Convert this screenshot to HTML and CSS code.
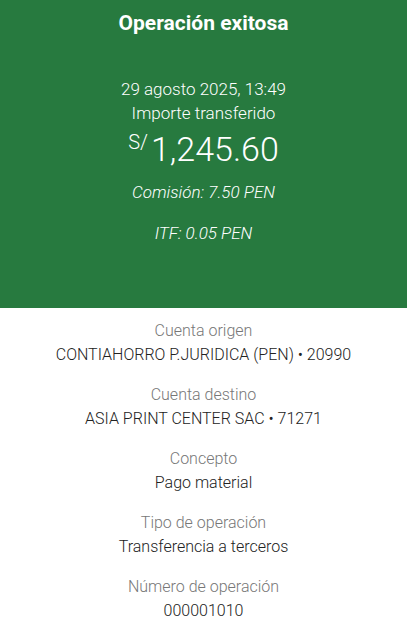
FILE: index.html
```html
<!DOCTYPE html>
<html lang="es">
<head>
    <meta charset="UTF-8">
    <meta name="viewport" content="width=device-width, initial-scale=1.0">
    <title>Operación exitosa</title>
    <link rel="stylesheet" href="styles.css">
</head>
<body>
    <div class="header">
        <h1 class="header-title">Operación exitosa</h1>

        <div class="summary">
            <p class="summary-date">29 agosto 2025, 13:49</p>
            <p class="summary-label">Importe transferido</p>
            <p class="amount">
                <span class="amount-currency">S/</span><span class="amount-value">1,245.60</span>
            </p>
            <p class="fee fee-first">Comisión: 7.50 PEN</p>
            <p class="fee">ITF: 0.05 PEN</p>
        </div>
    </div>

    <div class="details">
        <div class="detail">
            <p class="detail-label">Cuenta origen</p>
            <p class="detail-value">CONTIAHORRO P.JURIDICA (PEN) • 20990</p>
        </div>
        <div class="detail">
            <p class="detail-label">Cuenta destino</p>
            <p class="detail-value">ASIA PRINT CENTER SAC • 71271</p>
        </div>
        <div class="detail">
            <p class="detail-label">Concepto</p>
            <p class="detail-value">Pago material</p>
        </div>
        <div class="detail">
            <p class="detail-label">Tipo de operación</p>
            <p class="detail-value">Transferencia a terceros</p>
        </div>
        <div class="detail">
            <p class="detail-label">Número de operación</p>
            <p class="detail-value">000001010</p>
        </div>
    </div>
</body>
</html>
```

FILE: styles.css
```css
* {
    margin: 0;
    padding: 0;
    box-sizing: border-box;
}

body {
    font-family: Roboto, 'Noto Sans', sans-serif;
    background-color: #ffffff;
    color: #222;
    text-align: center;
}

.header {
    background-color: #277a3f;
    color: #ffffff;
    height: 308px;
    padding-top: 10px;
}

.header-title {
    font-size: 21px;
    font-weight: 700;
    line-height: 26px;
}

.summary {
    margin-top: 41px;
}

.summary-date,
.summary-label {
    font-size: 17px;
    font-weight: 300;
    line-height: 24px;
}

.amount {
    display: flex;
    justify-content: center;
    align-items: flex-start;
    margin-top: 3px;
    line-height: 42px;
}

.amount-currency {
    font-size: 20px;
    font-weight: 300;
    line-height: 28px;
    margin-right: 3px;
}

.amount-value {
    font-size: 34px;
    font-weight: 300;
}

.fee {
    font-size: 17px;
    font-style: italic;
    font-weight: 300;
    line-height: 20px;
    margin-top: 21px;
}

.fee-first {
    margin-top: 12px;
}

.details {
    padding-top: 11px;
}

.detail {
    padding-bottom: 16px;
}

.detail-label {
    font-size: 16px;
    font-weight: 300;
    color: #777;
    line-height: 24px;
}

.detail-value {
    font-size: 16px;
    font-weight: 300;
    color: #222;
    line-height: 24px;
}
```
